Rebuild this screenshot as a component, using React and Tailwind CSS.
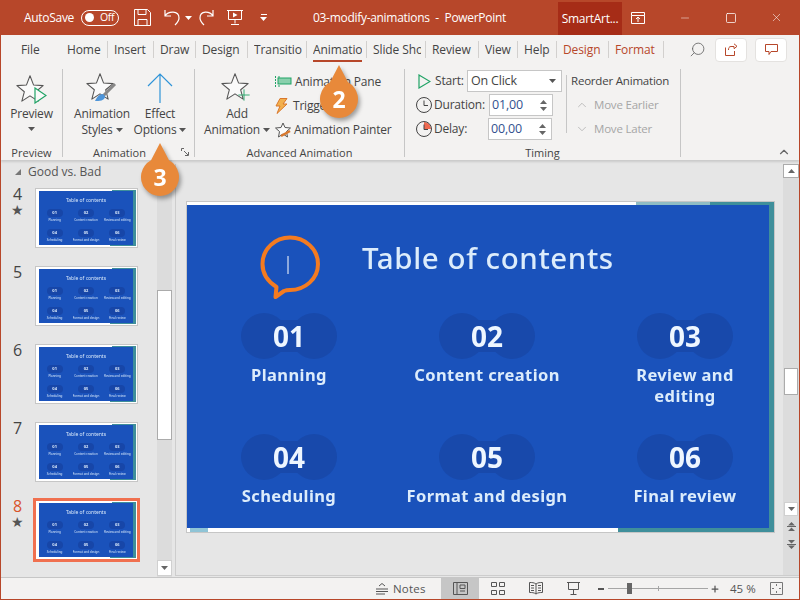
import React from 'react';
import { ChevronUp, ChevronDown, Search, X, Minus, Square, Plus } from 'lucide-react';

const ui = { fontFamily: '"Open Sans", "Noto Sans", sans-serif' };

const tabs = [
  { label: 'Home', w: 'w-[47px]' },
  { label: 'Insert', w: 'w-[46px]' },
  { label: 'Draw', w: 'w-[42px]' },
  { label: 'Design', w: 'w-[52px]' },
  { label: 'Transition', w: 'w-[59px]' },
  { label: 'Animations', w: 'w-[60px]', active: true },
  { label: 'Slide Show', w: 'w-[59px]' },
  { label: 'Review', w: 'w-[53px]' },
  { label: 'View', w: 'w-[39px]' },
  { label: 'Help', w: 'w-[39px]' },
  { label: 'Design', w: 'w-[52px]', context: true },
  { label: 'Format', w: 'w-[55px]', context: true },
];

const topics = [
  { no: '01', label: ['Planning'] },
  { no: '02', label: ['Content creation'] },
  { no: '03', label: ['Review and', 'editing'] },
  { no: '04', label: ['Scheduling'] },
  { no: '05', label: ['Format and design'] },
  { no: '06', label: ['Final review'] },
];

const thumbs = [
  { no: 4, star: true },
  { no: 5 },
  { no: 6 },
  { no: 7 },
  { no: 8, star: true, selected: true },
];

const Caret = ({ className = '' }) => (
  <svg width="7" height="4" viewBox="0 0 7 4" className={className}>
    <path d="M0 0h7L3.5 4z" fill="currentColor" />
  </svg>
);

const StarOutline = ({ size = 32 }) => (
  <svg width={size} height={size} viewBox="0 0 32 32" fill="none">
    <path d="M16 2l4 10.5 11 .8-8.500 7 2.800 10.700L16 25l-9.300 6 2.800-10.700L1 13.300l11-.8z" fill="#fafafa" stroke="#555" strokeWidth="1.200" strokeLinejoin="round" />
  </svg>
);

const Pill = ({ width, height }) => (
  <svg width={width} height={height} viewBox="0 0 96 46" className="absolute">
    <circle cx="23" cy="23" r="23" fill="#1849ab" />
    <circle cx="73" cy="23" r="23" fill="#1849ab" />
    <rect x="23" y="7" width="50" height="32" fill="#1849ab" />
  </svg>
);

const MiniSlide = () => (
  <div className="relative w-full h-full" style={{ fontFamily: '"Noto Sans", sans-serif' }}>
    <div className="absolute top-0 right-0 w-[24px] h-px bg-[#3f8f9b]" />
    <div className="absolute bottom-0 right-0 w-[26px] h-px bg-[#3f8f9b]" />
    <div className="absolute left-[2px] right-0 top-px bottom-px bg-[#1a52bb] border-r-[3px] border-[#3f8f9b] overflow-hidden flex flex-col items-center text-[#d8e8fa] blur-[0.3px]">
      <div className="text-[5px] leading-[6px] mt-[6px] mb-[6px]">Table of contents</div>
      <div className="grid grid-cols-3 w-full">
        {topics.map((t) => (
          <div key={t.no} className="flex flex-col items-center h-[20px]">
            <div className="w-[16px] h-[8px] rounded-full bg-[#1746a8] text-[4px] leading-[8px] text-center font-bold">{t.no}</div>
            <div className="text-[3px] leading-[4px] text-center mt-[1px]">{t.label.join(' ')}</div>
          </div>
        ))}
      </div>
    </div>
  </div>
);

const RibbonGroup = ({ width, label, labelClass = '', launcher, children }) => (
  <div className={`${width} relative flex flex-col shrink-0 mt-[7px] mb-[3px] border-r border-[#c6c6c6]`}>
    <div className="flex-1 min-h-0">{children}</div>
    <div className={`h-[14px] -mb-[3px] text-[11px] leading-[14px] text-center text-[#444] ${labelClass}`}>{label}</div>
    {launcher && (
      <svg width="9" height="9" viewBox="0 0 9 9" fill="none" stroke="#666" className="absolute right-[4px] bottom-0">
        <path d="M.5 3V.5H3M3 3l4 4M4 7.500h3.500V4" />
      </svg>
    )}
  </div>
);

const BigButton = ({ icon, lines, width, caret }) => (
  <div className={`${width} flex flex-col items-center text-[12px] tracking-[-0.2px] leading-[16px] text-[#444]`}>
    <div className="h-[36px] flex items-center justify-center mt-px">{icon}</div>
    <div>{lines[0]}</div>
    <div className="flex items-center gap-[3px]">
      {lines[1]}
      {caret && <Caret className="text-[#555]" />}
    </div>
  </div>
);

const Callout = ({ n, className }) => (
  <div className={`absolute z-20 w-[40px] h-[56px] drop-shadow-[2px_3px_2px_rgba(0,0,0,0.35)] ${className}`}>
    <svg width="40" height="56" viewBox="0 0 40 56" className="absolute">
      <path d="M20 0L29 17.300A19 19 0 1 1 11 17.300z" fill="#e8893a" />
    </svg>
    <div className="absolute inset-x-0 top-[17px] text-center text-white text-[23px] leading-[34px] font-bold">{n}</div>
  </div>
);

const SpinInput = ({ value }) => (
  <div className="w-[64px] h-[22px] bg-white border border-[#c6c6c6] flex items-center pl-[2px] text-[12.500px] text-[#33518f]">
    <span className="flex-1">{value}</span>
    <div className="flex flex-col gap-[3px] mr-[5px] text-[#666]">
      <Caret className="rotate-180" />
      <Caret />
    </div>
  </div>
);

export default function App() {
  return (
    <div className="relative w-[800px] h-[600px] overflow-hidden flex flex-col border-x border-b border-[#b7472a] bg-[#e6e6e6]" style={ui}>
      {/* title bar */}
      <div className="h-[35px] -mx-px shrink-0 bg-[#b7472a] flex items-center text-white text-[12px] tracking-[-0.3px] pl-[24px]">
        <span className="w-[50px]">AutoSave</span>
        <div className="ml-[7px] w-[38px] h-[16px] rounded-full border border-white flex items-center pl-[3px] gap-[6px]">
          <span className="w-[9px] h-[9px] rounded-full bg-white" />
          <span className="text-[10.500px] leading-none">Off</span>
        </div>
        <svg width="17" height="17" viewBox="0 0 17 17" fill="none" stroke="white" className="ml-[15px]">
          <path d="M.5.5h13l3 3v13H.5zM4 .5v5h8v-5M4 16.500v-6h9v6" />
        </svg>
        <svg width="17" height="17" viewBox="0 0 17 17" fill="none" stroke="white" strokeWidth="1.200" className="ml-[13px]">
          <path d="M1 1v6h6M1 7c3-5 14-6 14 2 0 3-2 5-4 7" />
        </svg>
        <Caret className="ml-[4px]" />
        <svg width="15" height="17" viewBox="0 0 15 17" fill="none" stroke="white" strokeWidth="1.200" className="ml-[7px]">
          <path d="M14 1v6H8M14 7C11 2 1 1 1 9c0 3 2 5 4 7" />
        </svg>
        <svg width="18" height="17" viewBox="0 0 18 17" fill="none" stroke="white" className="ml-[12px]">
          <path d="M1 1.500h16M2.500 1.500v9h13v-9M9 10.500v4M5 15.500h8" />
          <path d="M7 3.500l4.500 2.500L7 8.500z" fill="white" stroke="none" />
        </svg>
        <div className="ml-[16px] flex flex-col items-center gap-[2px]">
          <span className="w-[6px] h-px bg-white" />
          <Caret />
        </div>
        <span className="ml-[46px] w-[197px] whitespace-nowrap">03-modify-animations&nbsp; -&nbsp; PowerPoint</span>
        <div className="ml-[48px] w-[64px] h-[33px] mt-[2px] bg-[#a62c17] flex items-center justify-center">SmartArt...</div>
        <svg width="14" height="12" viewBox="0 0 14 12" fill="none" stroke="white" className="ml-[9px]">
          <path d="M.5 3.500v8h13v-8M.5.500h13v3H.5zM7 10V5.500M5 7l2-2 2 2" />
        </svg>
        <Minus size={12} strokeWidth={1} className="ml-[34px]" />
        <Square size={12} strokeWidth={1.500} className="ml-[34px]" />
        <X size={13} strokeWidth={1} className="ml-[33px]" />
      </div>

      {/* tabs */}
      <div className="h-[27px] pt-[2px] shrink-0 bg-[#f3f2f1] flex items-center text-[12px] tracking-[-0.1px] text-[#444]">
        <span className="w-[60px] pl-[20px]">File</span>
        {tabs.map((t, i) => (
          <div key={i} className={`relative ${t.w} h-[17px] shrink-0 border-r border-[#d2d0ce] flex items-center pl-[6px] pr-[4px]`}>
            <span className={`block flex-1 min-w-0 overflow-hidden whitespace-nowrap ${t.context ? 'text-[#b7472a]' : ''}`}>{t.label}</span>
            {t.active && <span className="absolute left-[6px] right-[4px] -bottom-[4px] h-[2px] bg-[#b7472a]" />}
          </div>
        ))}
        <Search size={17} strokeWidth={1.200} className="ml-[25px] -scale-x-100 text-[#666]" />
        <div className="ml-[9px] w-[32px] h-[24px] bg-white border border-[#e4e2e0] rounded-sm flex items-center justify-center">
          <svg width="13" height="13" viewBox="0 0 13 13" fill="none" stroke="#b7472a">
            <path d="M9 5.500v-2H6C4 3.500 3.500 5 3.500 7M9 .800l3 2.500-3 2.500M.5 4.500v8h9V8" />
          </svg>
        </div>
        <div className="ml-[8px] w-[32px] h-[24px] bg-white border border-[#e4e2e0] rounded-sm flex items-center justify-center">
          <svg width="13" height="12" viewBox="0 0 13 12" fill="none" stroke="#b7472a">
            <path d="M.5.500h12v7H6l-2 3v-3H.5z" />
          </svg>
        </div>
      </div>

      {/* ribbon */}
      <div className="h-[98px] shrink-0 bg-[#f3f2f1] flex shadow-[0_2px_2px_rgba(0,0,0,0.12)] z-10 relative">
        <RibbonGroup width="w-[62px]" label="Preview">
          <div className="flex flex-col items-center text-[12px] tracking-[-0.2px] leading-[16px] text-[#444]">
            <div className="relative h-[36px] mt-px w-[32px] flex items-center">
              <StarOutline size={28} />
              <svg width="13" height="17" viewBox="0 0 13 17" fill="#fafafa" stroke="#21a366" strokeWidth="1.200" className="absolute left-[18px] top-[17px]">
                <path d="M1 1l11 7.500L1 16z" />
              </svg>
            </div>
            <div>Preview</div>
            <Caret className="mt-[5px] text-[#555]" />
          </div>
        </RibbonGroup>

        <RibbonGroup width="w-[132px]" label="Animation" labelClass="pr-[18px]" launcher>
          <div className="flex pl-[10px]">
            <BigButton
              width="w-[58px]"
              lines={['Animation', 'Styles']}
              caret
              icon={
                <div className="relative w-[32px] h-[32px]">
                  <StarOutline size={28} />
                  <svg width="24" height="20" viewBox="0 0 24 20" className="absolute left-[8px] top-[11px]">
                    <path d="M21 1L9 13" stroke="#888" strokeWidth="3" />
                    <path d="M9 11c-4 0-6 3-8 7 4 0 10 0 10-5z" fill="#4e95d9" />
                  </svg>
                </div>
              }
            />
            <BigButton
              width="w-[58px]"
              lines={['Effect', 'Options']}
              caret
              icon={
                <svg width="26" height="30" viewBox="0 0 26 30" fill="none" stroke="#2f94d8" strokeWidth="1.200">
                  <path d="M13 1v29M1 13L13 1l12 12" />
                </svg>
              }
            />
          </div>
        </RibbonGroup>

        <RibbonGroup width="w-[210px]" label="Advanced Animation">
          <div className="flex pl-[9px]">
            <BigButton
              width="w-[66px]"
              lines={['Add', 'Animation']}
              caret
              icon={
                <div className="relative w-[32px] h-[32px]">
                  <StarOutline size={28} />
                  <Plus size={18} strokeWidth={1.200} className="absolute left-[14px] top-[14px] text-[#21a366]" />
                </div>
              }
            />
            <div className="pl-[5px] pt-px flex flex-col text-[12px] tracking-[-0.2px] text-[#444] whitespace-nowrap">
              <div className="h-[24px] flex items-center gap-[3px]">
                <svg width="17" height="12" viewBox="0 0 17 12" fill="none">
                  <path d="M.5 0v12M4 0v12" stroke="#21a366" strokeDasharray="2 1" />
                  <rect x="3" y="2" width="13" height="6" fill="#8ad0ad" stroke="#21a366" />
                </svg>
                <span>Animation Pane</span>
              </div>
              <div className="h-[24px] flex items-center gap-[5px]">
                <svg width="13" height="16" viewBox="0 0 13 16">
                  <path d="M5 .5h7L8 6h4L2 15.500 5 8H1z" fill="#f2b04d" stroke="#d9772b" />
                </svg>
                <span>Trigger</span>
              </div>
              <div className="h-[24px] flex items-center gap-[2px]">
                <svg width="17" height="17" viewBox="0 0 17 17" fill="none">
                  <path d="M8 1l2 4.500 5.500.5-4 3.500 1 5.500L8 12l-4.500 3 1-5.500-4-3.500 5.500-.5z" stroke="#555" fill="#fafafa" />
                  <path d="M6 14l9-5" stroke="#d9772b" strokeWidth="2.500" />
                </svg>
                <span>Animation Painter</span>
              </div>
            </div>
          </div>
        </RibbonGroup>

        <RibbonGroup width="w-[276px]" label="Timing">
          <div className="flex text-[12px] tracking-[-0.2px] text-[#444] whitespace-nowrap">
            <div className="w-[161px] pl-[11px] pt-px flex flex-col gap-[2px]">
              <div className="h-[22px] flex items-center">
                <svg width="13" height="15" viewBox="0 0 13 15" fill="none" stroke="#21a366" strokeWidth="1.200" className="ml-[2px]">
                  <path d="M1 1l11 6.500L1 14z" />
                </svg>
                <span className="ml-[4px] w-[32px]">Start:</span>
                <div className="w-[95px] h-[22px] bg-white border border-[#c6c6c6] flex items-center justify-between pl-[3px] pr-[5px] text-[12.500px]">
                  <span>On Click</span>
                  <Caret className="text-[#555]" />
                </div>
              </div>
              <div className="h-[22px] flex items-center">
                <svg width="16" height="16" viewBox="0 0 16 16" fill="none" stroke="#444">
                  <circle cx="8" cy="8" r="7.500" />
                  <path d="M8 3.500V8.500h4" />
                </svg>
                <span className="ml-[2px] w-[55px]">Duration:</span>
                <SpinInput value="01,00" />
              </div>
              <div className="h-[22px] flex items-center">
                <svg width="16" height="16" viewBox="0 0 16 16" fill="none" stroke="#444">
                  <path d="M8 8V1a7 7 0 0 1 7 7z" fill="#ef6950" stroke="none" />
                  <circle cx="8" cy="8" r="7.500" />
                  <path d="M8 3.500V8.500h4" />
                </svg>
                <span className="ml-[2px] w-[54px]">Delay:</span>
                <SpinInput value="00,00" />
              </div>
            </div>
            <div className="h-[58px] mt-[6px] border-l border-[#c6c6c6] pl-[4px] text-[11.500px]">
              <div className="h-[12px] flex items-center mb-[6px]">Reorder Animation</div>
              <div className="h-[24px] flex items-center gap-[5px] pl-[4px] text-[#a6a6a6]">
                <ChevronUp size={14} strokeWidth={1.200} />
                Move Earlier
              </div>
              <div className="h-[24px] flex items-center gap-[5px] pl-[4px] text-[#a6a6a6]">
                <ChevronDown size={14} strokeWidth={1.200} />
                Move Later
              </div>
            </div>
          </div>
        </RibbonGroup>
        <ChevronUp size={14} strokeWidth={2} className="absolute right-[8px] bottom-[1px] text-[#666]" />
      </div>

      {/* main area */}
      <div className="flex-1 min-h-0 flex">
        {/* thumbnail pane */}
        <div className="w-[171px] shrink-0 flex overflow-hidden">
          <div className="w-[156px] shrink-0 flex flex-col overflow-hidden">
            <div className="h-[23px] mb-[5px] shrink-0 flex items-center pl-[14px] text-[12px] text-[#555] gap-[7px]">
              <svg width="6" height="6" viewBox="0 0 6 6"><path d="M6 0v6H0z" fill="#777" /></svg>
              Good vs. Bad
            </div>
            {thumbs.map((t) => (
              <div key={t.no} className={`flex shrink-0 ${t.selected ? 'h-[64px] mt-[-2px]' : 'h-[60px] mb-[18px]'}`}>
                <div className="w-[32px] flex flex-col items-center pl-[1px]">
                  <span className={`text-[16px] leading-[12px] ${t.selected ? 'text-[#d9542b] mt-[2px]' : 'text-[#444]'}`}>{t.no}</span>
                  {t.star && <span className="text-[14px] leading-[14px] text-[#555] mt-[3px]">★</span>}
                </div>
                <div className={t.selected ? 'w-[107px] h-[64px] border-[3px] border-[#f0704f] bg-white p-px' : 'w-[103px] h-[60px] ml-[2px] border border-[#c6c6c6] bg-white p-px'}>
                  <MiniSlide />
                </div>
              </div>
            ))}
          </div>
          <div className="w-[15px] shrink-0 bg-[#dcdcdc] flex flex-col">
            <div className="h-[130px] shrink-0" />
            <div className="h-[150px] shrink-0 bg-white border border-[#ababab]" />
            <div className="flex-1" />
            <div className="h-[16px] mb-[1px] bg-white border border-[#d0d0d0] flex items-center justify-center text-[#666]">
              <Caret />
            </div>
          </div>
        </div>

        {/* canvas */}
        <div className="flex-1 min-w-0 flex ml-[3px] border-l border-[#cdcdcd] mt-[4px] mb-px border-b">
          <div className="flex-1 min-w-0 pl-[11px] pt-[38px]">
            <div className="relative w-[587px] h-[330px] bg-white outline outline-1 outline-[#c6c6c6]">
              <div className="absolute top-0 right-0 h-[3px] w-[138px] bg-[#8fbcc4]" />
              <div className="absolute top-0 right-0 h-[3px] w-[64px] bg-[#3f8f9b]" />
              <div className="absolute top-0 bottom-0 right-0 w-[5px] bg-[#3f8f9b]" />
              <div className="absolute bottom-0 right-0 h-[4px] w-[156px] bg-[#3f8f9b]" />
              <div className="absolute left-[3px] bottom-0 h-[4px] w-[18px] bg-[#8fc4d6]" />
              <div className="absolute left-0 top-[3px] w-[582px] h-[323px] bg-[#1a52bb] overflow-hidden text-[#dcecfb]" style={{ fontFamily: '"Noto Sans", sans-serif' }}>
                <div className="h-[108px] pl-[175px] blur-[0.4px]">
                  <div className="pt-[33px] text-[29.500px] leading-[40px] font-medium tracking-[0.6px] whitespace-nowrap">Table of contents</div>
                </div>
                <div className="grid grid-cols-[198px_198px_198px] grid-rows-[121px_1fr] pl-[3px] blur-[0.4px]">
                  {topics.map((t) => (
                    <div key={t.no} className="flex flex-col items-center">
                      <div className="relative w-[96px] h-[46px] flex items-center justify-center">
                        <Pill width={96} height={46} />
                        <span className="relative text-[28px] leading-[46px] font-bold text-[#eef6ff]">{t.no}</span>
                      </div>
                      <div className="mt-[5px] text-[16.500px] leading-[21px] font-bold tracking-[0.4px] text-center whitespace-nowrap">
                        {t.label.map((l) => (
                          <div key={l}>{l}</div>
                        ))}
                      </div>
                    </div>
                  ))}
                </div>
              </div>
            </div>
          </div>
          <div className="w-[16px] shrink-0 bg-[#dcdcdc] flex flex-col items-center">
            <div className="w-[16px] h-[14px] shrink-0 bg-white border border-[#ababab] flex items-center justify-center text-[#666]">
              <Caret className="rotate-180" />
            </div>
            <div className="h-[190px] shrink-0" />
            <div className="w-[14px] h-[27px] shrink-0 bg-white border border-[#ababab]" />
            <div className="flex-1" />
            <div className="w-[14px] h-[14px] bg-white border border-[#d0d0d0] flex items-center justify-center text-[#666]">
              <Caret />
            </div>
            <div className="h-[59px] shrink-0 flex flex-col items-center pt-[6px] gap-[9px] text-[#666]">
              <svg width="9" height="9" viewBox="0 0 9 9" fill="currentColor"><path d="M4.500 0L8 3.500H1zM0 4h9v1H0zM4.500 5.500L8 9H1z" /></svg>
              <svg width="9" height="9" viewBox="0 0 9 9" fill="currentColor"><path d="M1 0h7L4.500 3.500zM0 4h9v1H0zM1 5.500h7L4.500 9z" /></svg>
            </div>
          </div>
        </div>
      </div>

      {/* status bar */}
      <div className="h-[22px] shrink-0 bg-[#f3f2f1] border-t border-[#c6c6c6] flex items-center text-[#555] text-[11.500px]">
        <svg width="12" height="12" viewBox="0 0 12 12" fill="none" stroke="#555" className="ml-[375px]">
          <path d="M3 3l3-2.500L9 3M0 6h12M0 8.500h12M0 11h9" />
        </svg>
        <span className="ml-[5px] w-[48px] tracking-[0.2px]">Notes</span>
        <div className="w-[38px] h-full bg-[#c6c6c6] flex items-center justify-center">
          <svg width="15" height="13" viewBox="0 0 15 13" fill="none" stroke="#555"><path d="M.5.500h14v12H.5zM4 .5v12M7 3h5v3.500H7zM7 9h5" /></svg>
        </div>
        <svg width="14" height="13" viewBox="0 0 14 13" fill="none" stroke="#555" className="ml-[12px]"><path d="M.5.500h5v4h-5zM8.500.500h5v4h-5zM.5 8.500h5v4h-5zM8.500 8.500h5v4h-5z" /></svg>
        <svg width="14" height="13" viewBox="0 0 14 13" fill="none" stroke="#555" className="ml-[24px]"><path d="M7 2C5 .5 3 .5.500.5v10C3 10.500 5 10.500 7 12c2-1.500 4-1.500 6.500-1.500V.5C11 .5 9 .5 7 2zM7 2v10M2 3.500h3M2 6h3M2 8.500h3M9 3.500h3M9 6h3M9 8.500h3" /></svg>
        <svg width="13" height="13" viewBox="0 0 13 13" fill="none" stroke="#555" className="ml-[24px]"><path d="M0 .500h13M1.500 .500v7h10v-7M6.500 7.500v5M3.500 12.500h6" /></svg>
        <span className="ml-[18px] w-[6px] h-[2px] bg-[#555]" />
        <div className="relative ml-[4px] w-[100px] h-px bg-[#a6a6a6]">
          <span className="absolute left-[19px] -top-[5px] w-[5px] h-[11px] bg-[#666]" />
          <span className="absolute left-[50px] -top-[2px] w-px h-[5px] bg-[#a6a6a6]" />
        </div>
        <Plus size={10} strokeWidth={3} className="ml-[2px] text-[#555]" />
        <span className="ml-[10px] whitespace-nowrap">45 %</span>
        <svg width="13" height="13" viewBox="0 0 13 13" fill="none" stroke="#777" className="ml-[14px]"><path d="M.5.500h12v12H.5z" /><path d="M6.500 2v2M6.500 9v2M2 6.500h2M9 6.500h2" /></svg>
      </div>

      {/* callouts */}
      <Callout n="2" className="left-[318px] top-[65px]" />
      <Callout n="3" className="left-[139px] top-[143px]" />

      {/* animation marker on the slide */}
      <svg width="66" height="68" viewBox="0 0 66 68" fill="none" className="absolute left-[257px] top-[235px]">
        <path d="M18.500 52C9 46 4.500 38 4.500 29 4.500 14 17 2.500 32 2.500S60 14 60 29 47 55 32 55c-2 0-4 .2-6 1l-8.500 6z" stroke="#f47b20" strokeWidth="4" strokeLinejoin="round" />
        <path d="M30 21v18" stroke="white" />
      </svg>
    </div>
  );
}
